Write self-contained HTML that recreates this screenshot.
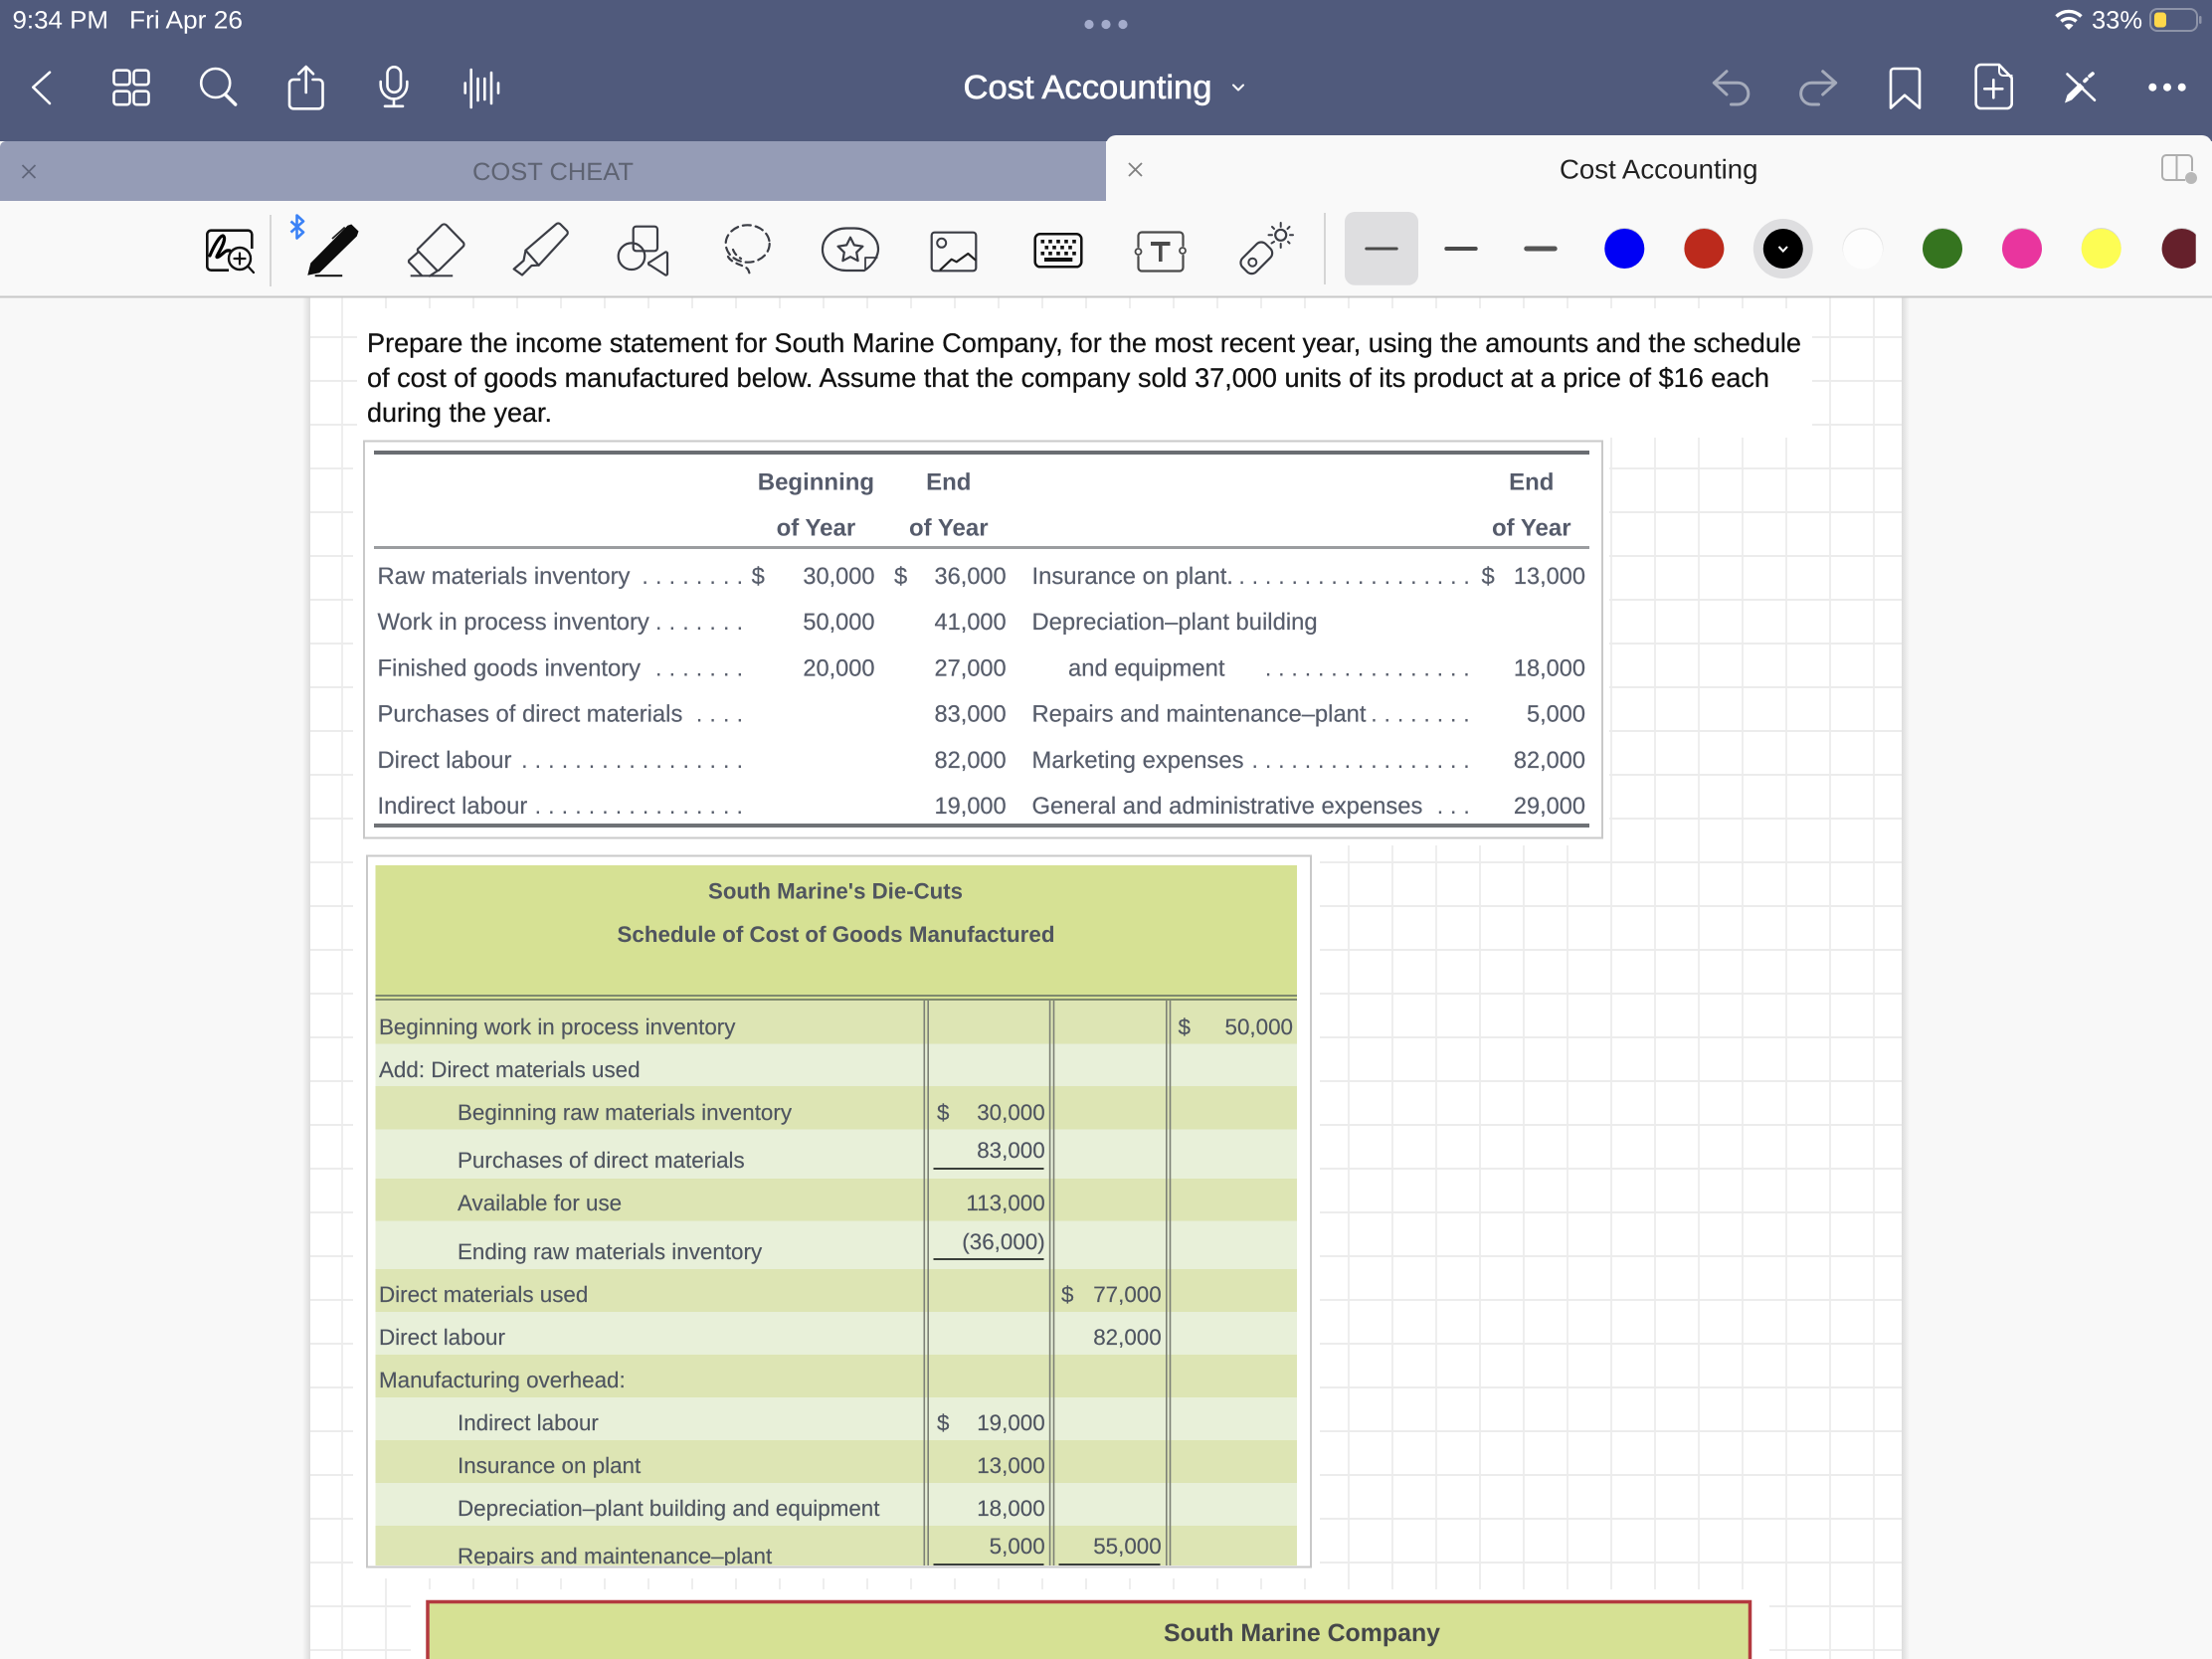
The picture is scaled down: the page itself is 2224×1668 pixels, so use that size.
<!DOCTYPE html>
<html><head><meta charset="utf-8"><title>Cost Accounting</title>
<style>
html,body{margin:0;padding:0;background:#f8f8f8}
svg{display:block;text-rendering:geometricPrecision}
text{font-family:"Liberation Sans",sans-serif;white-space:pre}
.t{font-size:23.8px;fill:#575d6b;stroke:#575d6b;stroke-width:.2}
.b{font-size:24px;fill:#555b6b;font-weight:700;text-anchor:middle}
.n{font-size:23.6px;fill:#575d6b;stroke:#575d6b;stroke-width:.2;text-anchor:end}
.d{font-size:24px;fill:#575d6b;letter-spacing:6.93px}
.r{font-size:24px;fill:#575d6b;letter-spacing:6.63px}
.q{font-size:27px;fill:#111;stroke:#111;stroke-width:.25}
.s{font-size:22.4px;fill:#4e5460;stroke:#4e5460;stroke-width:.15}
.sn{font-size:22.4px;fill:#4e5460;stroke:#4e5460;stroke-width:.15;text-anchor:end}
.ic{fill:none;stroke:#fff;stroke-width:2.6;stroke-linecap:round;stroke-linejoin:round}
.tb{fill:none;stroke:#3b3d45;stroke-width:2.2;stroke-linecap:round;stroke-linejoin:round}
</style></head>
<body>
<svg xmlns="http://www.w3.org/2000/svg" width="2224" height="1668" viewBox="0 0 2224 1668">
<defs>
<pattern id="g" patternUnits="userSpaceOnUse" x="322" y="317" width="44" height="44">
<rect x="21.4" width="1.2" height="44" fill="#e3e3e3"/>
<rect y="21" width="44" height="2" fill="#ececec"/>
</pattern>
<linearGradient id="sl" x1="0" x2="1"><stop offset="0" stop-color="#f8f8f8"/><stop offset="1" stop-color="#dcdcdc"/></linearGradient>
<linearGradient id="sr" x1="0" x2="1"><stop offset="0" stop-color="#dcdcdc"/><stop offset="1" stop-color="#f8f8f8"/></linearGradient>
<clipPath id="tc"><rect x="370" y="862" width="946" height="712"/></clipPath>
<clipPath id="mc"><rect x="2100" y="200" width="107.7" height="90"/></clipPath>
</defs>

<!-- page -->
<rect width="2224" height="1668" fill="#f8f8f8"/>
<rect x="304" y="298" width="8" height="1370" fill="url(#sl)"/>
<rect x="1912" y="298" width="8" height="1370" fill="url(#sr)"/>
<rect x="312" y="298" width="1600" height="1370" fill="#fff"/>
<rect x="312" y="298" width="1600" height="1370" fill="url(#g)"/>
<!-- image blocks covering grid -->
<rect x="359" y="310" width="1463" height="130" fill="#fff"/>
<rect x="355" y="440" width="1263" height="410" fill="#fff"/>
<rect x="355" y="849" width="972" height="738" fill="#fff"/>
<rect x="413" y="1598" width="1366" height="70" fill="#fff"/>

<!-- question -->
<text class="q" x="369" y="354" textLength="1442" lengthAdjust="spacingAndGlyphs">Prepare the income statement for South Marine Company, for the most recent year, using the amounts and the schedule</text>
<text class="q" x="369" y="389" textLength="1410" lengthAdjust="spacingAndGlyphs">of cost of goods manufactured below. Assume that the company sold 37,000 units of its product at a price of $16 each</text>
<text class="q" x="369" y="424" textLength="186" lengthAdjust="spacingAndGlyphs">during the year.</text>

<!-- table 1 -->
<rect x="366" y="443.5" width="1245" height="399" fill="#fff" stroke="#c9c9c9" stroke-width="2"/>
<rect x="376" y="453" width="1222" height="4" fill="#6a6d72"/>
<rect x="376" y="549" width="1222" height="3" fill="#9b9da0"/>
<rect x="376" y="828" width="1222" height="4" fill="#6f7276"/>
<text class="b" x="820.4" y="492.5">Beginning</text>
<text class="b" x="953.8" y="492.5">End</text>
<text class="b" x="820.4" y="538.5">of Year</text>
<text class="b" x="953.8" y="538.5">of Year</text>
<text class="b" x="1539.8" y="492.5">End</text>
<text class="b" x="1539.8" y="538.5">of Year</text>

<text class="t" x="379.5" y="587">Raw materials inventory</text>
<text class="t" x="379.5" y="633">Work in process inventory</text>
<text class="t" x="379.5" y="679.5">Finished goods inventory</text>
<text class="t" x="379.5" y="725.5">Purchases of direct materials</text>
<text class="t" x="379.5" y="772">Direct labour</text>
<text class="t" x="379.5" y="818">Indirect labour</text>
<text class="d" x="645.3" y="587">........</text>
<text class="d" x="658.9" y="633">.......</text>
<text class="d" x="658.9" y="679.5">.......</text>
<text class="d" x="699.7" y="725.5">....</text>
<text class="d" x="524" y="772" style="letter-spacing:6.86px">.................</text>
<text class="d" x="537.5" y="818" style="letter-spacing:6.86px">................</text>
<text class="t" x="755.6" y="587">$</text>
<text class="t" x="899" y="587">$</text>
<text class="n" x="879.5" y="587">30,000</text>
<text class="n" x="879.5" y="633">50,000</text>
<text class="n" x="879.5" y="679.5">20,000</text>
<text class="n" x="1011.7" y="587">36,000</text>
<text class="n" x="1011.7" y="633">41,000</text>
<text class="n" x="1011.7" y="679.5">27,000</text>
<text class="n" x="1011.7" y="725.5">83,000</text>
<text class="n" x="1011.7" y="772">82,000</text>
<text class="n" x="1011.7" y="818">19,000</text>

<text class="t" x="1037.5" y="587">Insurance on plant.</text>
<text class="t" x="1037.5" y="633">Depreciation–plant building</text>
<text class="t" x="1074" y="679.5">and equipment</text>
<text class="t" x="1037.5" y="725.5">Repairs and maintenance–plant</text>
<text class="t" x="1037.5" y="772">Marketing expenses</text>
<text class="t" x="1037.5" y="818">General and administrative expenses</text>
<text class="r" x="1245.2" y="587">..................</text>
<text class="r" x="1271.7" y="679.5">................</text>
<text class="r" x="1378.1" y="725.5">........</text>
<text class="r" x="1258.4" y="772">.................</text>
<text class="r" x="1444.6" y="818">...</text>
<text class="t" x="1489.5" y="587">$</text>
<text class="n" x="1594" y="587">13,000</text>
<text class="n" x="1594" y="679.5">18,000</text>
<text class="n" x="1594" y="725.5">5,000</text>
<text class="n" x="1594" y="772">82,000</text>
<text class="n" x="1594" y="818">29,000</text>

<!-- table 2 -->
<rect x="369" y="860.5" width="949" height="715" fill="#fff" stroke="#c9c9c9" stroke-width="2"/>
<g clip-path="url(#tc)">
<rect x="377.5" y="870" width="926.5" height="130" fill="#d6e194"/>
<rect x="377.5" y="1000" width="926.5" height="6" fill="#d6e194"/>
<rect x="377.5" y="1000" width="926.5" height="2" fill="#7f8a6e"/>
<rect x="377.5" y="1004" width="926.5" height="2" fill="#7f8a6e"/>
<rect x="377.5" y="1006" width="926.5" height="43.5" fill="#dde5b4"/>
<rect x="377.5" y="1049.5" width="926.5" height="42.5" fill="#e8f0d9"/>
<rect x="377.5" y="1092" width="926.5" height="43.5" fill="#dde5b4"/>
<rect x="377.5" y="1135.5" width="926.5" height="49.5" fill="#e8f0d9"/>
<rect x="377.5" y="1185" width="926.5" height="42.5" fill="#dde5b4"/>
<rect x="377.5" y="1227.5" width="926.5" height="48.5" fill="#e8f0d9"/>
<rect x="377.5" y="1276" width="926.5" height="43" fill="#dde5b4"/>
<rect x="377.5" y="1319" width="926.5" height="43" fill="#e8f0d9"/>
<rect x="377.5" y="1362" width="926.5" height="43" fill="#dde5b4"/>
<rect x="377.5" y="1405" width="926.5" height="43" fill="#e8f0d9"/>
<rect x="377.5" y="1448" width="926.5" height="43" fill="#dde5b4"/>
<rect x="377.5" y="1491" width="926.5" height="43" fill="#e8f0d9"/>
<rect x="377.5" y="1534" width="926.5" height="42" fill="#dde5b4"/>
<!-- double rules -->
<g fill="#7c8076">
<rect x="928.5" y="1006" width="1.6" height="570"/><rect x="932.4" y="1006" width="1.6" height="570"/>
<rect x="1054.8" y="1006" width="1.6" height="570"/><rect x="1058.7" y="1006" width="1.6" height="570"/>
<rect x="1172" y="1006" width="1.6" height="570"/><rect x="1175.7" y="1006" width="1.6" height="570"/>
</g>
<text x="840" y="903.5" font-size="22.5" font-weight="700" fill="#50555f" text-anchor="middle" textLength="256" lengthAdjust="spacingAndGlyphs">South Marine's Die-Cuts</text>
<text x="840.5" y="947" font-size="22.5" font-weight="700" fill="#50555f" text-anchor="middle" textLength="440" lengthAdjust="spacingAndGlyphs">Schedule of Cost of Goods Manufactured</text>
<text class="s" x="381" y="1040">Beginning work in process inventory</text>
<text class="s" x="381" y="1083">Add: Direct materials used</text>
<text class="s" x="460" y="1126">Beginning raw materials inventory</text>
<text class="s" x="460" y="1174">Purchases of direct materials</text>
<text class="s" x="460" y="1217">Available for use</text>
<text class="s" x="460" y="1266">Ending raw materials inventory</text>
<text class="s" x="381" y="1309">Direct materials used</text>
<text class="s" x="381" y="1352">Direct labour</text>
<text class="s" x="381" y="1395">Manufacturing overhead:</text>
<text class="s" x="460" y="1438">Indirect labour</text>
<text class="s" x="460" y="1481">Insurance on plant</text>
<text class="s" x="460" y="1524">Depreciation–plant building and equipment</text>
<text class="s" x="460" y="1572">Repairs and maintenance–plant</text>
<text class="s" x="1184.5" y="1040">$</text>
<text class="sn" x="1300" y="1040">50,000</text>
<text class="s" x="942" y="1126">$</text>
<text class="sn" x="1050.7" y="1126">30,000</text>
<text class="sn" x="1050.7" y="1164">83,000</text>
<rect x="938.5" y="1174" width="111" height="2" fill="#3a3f3a"/>
<text class="sn" x="1050.7" y="1217">113,000</text>
<text class="sn" x="1050.7" y="1256">(36,000)</text>
<rect x="938.5" y="1265" width="111" height="2" fill="#3a3f3a"/>
<text class="s" x="1067" y="1309">$</text>
<text class="sn" x="1167.7" y="1309">77,000</text>
<text class="sn" x="1167.7" y="1352">82,000</text>
<text class="s" x="942" y="1438">$</text>
<text class="sn" x="1050.7" y="1438">19,000</text>
<text class="sn" x="1050.7" y="1481">13,000</text>
<text class="sn" x="1050.7" y="1524">18,000</text>
<text class="sn" x="1050.7" y="1562">5,000</text>
<text class="sn" x="1167.7" y="1562">55,000</text>
<rect x="938.5" y="1572" width="111" height="2" fill="#3a3f3a"/>
<rect x="1064.5" y="1572" width="102" height="2" fill="#3a3f3a"/>
</g>

<!-- block 3 -->
<rect x="430" y="1610.5" width="1329.5" height="60" fill="#d6e194" stroke="#b3393f" stroke-width="3.5"/>
<text x="1170" y="1650" font-size="25" font-weight="700" fill="#45474a" textLength="278" lengthAdjust="spacingAndGlyphs">South Marine Company</text>

<!-- header -->
<rect width="2224" height="142" fill="#505a7c"/>
<text x="12.5" y="28.5" font-size="25" fill="#fff" textLength="96.500" lengthAdjust="spacingAndGlyphs">9:34 PM</text>
<text x="130" y="28.5" font-size="25" fill="#fff" textLength="114" lengthAdjust="spacingAndGlyphs">Fri Apr 26</text>
<circle cx="1095" cy="24.5" r="4.6" fill="#a3abcb"/><circle cx="1112" cy="24.5" r="4.6" fill="#a3abcb"/><circle cx="1129" cy="24.5" r="4.6" fill="#a3abcb"/>
<!-- wifi -->
<g fill="none" stroke="#fff" stroke-width="3.4">
<path d="M2067.5 16.5A18 18 0 0 1 2092.5 16.5"/>
<path d="M2072.5 21.5A11 11 0 0 1 2087.5 21.5"/>
</g>
<path d="M2075.5 25.5A6.5 6.5 0 0 1 2084.5 25.5L2080 30Z" fill="#fff"/>
<text x="2103" y="28.5" font-size="25" fill="#fff" textLength="51" lengthAdjust="spacingAndGlyphs">33%</text>
<rect x="2162" y="9" width="47" height="22" rx="7" fill="none" stroke="#8d93a8" stroke-width="2"/>
<rect x="2166" y="12.5" width="12" height="15" rx="3.5" fill="#ffd84a"/>
<rect x="2211" y="16" width="2.5" height="8" rx="1.2" fill="#8d93a8"/>

<!-- left nav icons -->
<path class="ic" stroke-width="3" d="M50 72.7L33.3 87.7L50 104"/>
<rect class="ic" x="114.5" y="70.7" width="16" height="14.5" rx="3"/>
<rect class="ic" x="134.5" y="70.7" width="15" height="14.5" rx="3"/>
<rect class="ic" x="114.5" y="91.7" width="16" height="13.5" rx="3"/>
<rect class="ic" x="134.5" y="91.7" width="15" height="13.5" rx="3"/>
<circle class="ic" cx="216.7" cy="83.5" r="14.5"/>
<path class="ic" style="stroke-width:3.4" d="M226.5 95L236.7 105"/>
<path class="ic" d="M301 80H295A4 4 0 0 0 291 84V105A4 4 0 0 0 295 109.3H320.5A4 4 0 0 0 324.5 105V84A4 4 0 0 0 320.5 80H314.5"/>
<path class="ic" d="M307.7 93V67M300.3 74.3L307.7 67L315 74.3"/>
<rect class="ic" x="389.5" y="67.3" width="13.5" height="25.5" rx="6.7"/>
<path class="ic" d="M382.7 82V85A13.3 14.5 0 0 0 409.3 85V82M396 100V106.7M387 106.8H405"/>
<path class="ic" d="M467.7 83.5V93.5M473.7 70V108M480.5 79V101M487.3 79V100M494 73V104M501 83.5V93.5"/>

<!-- title -->
<text x="968.5" y="99" font-size="33.5" fill="#fff" stroke="#fff" stroke-width=".6" textLength="250" lengthAdjust="spacingAndGlyphs">Cost Accounting</text>
<path class="ic" style="stroke-width:2" d="M1240 85.5L1245 90.5L1250 85.5"/>

<!-- right nav icons -->
<g fill="none" stroke="#a5abbb" stroke-width="3" stroke-linecap="round" stroke-linejoin="round">
<path d="M1736 71.7L1723.3 83.3L1736 95M1723.3 83.3H1747A10.8 10.8 0 0 1 1747 105H1740.5"/>
<path d="M1832.7 71.7L1845.7 83.3L1832.7 95M1845.7 83.3H1821.5A10.8 10.8 0 0 0 1821.5 105H1828.5"/>
</g>
<path class="ic" d="M1904 69H1927A3 3 0 0 1 1930 72V108.5L1915 95.7L1901 108.5V72A3 3 0 0 1 1904 69Z"/>
<path class="ic" d="M1992 65H2010L2022.7 78.3V104A5 5 0 0 1 2017.7 109H1991.7A5 5 0 0 1 1986.7 104V70A5 5 0 0 1 1992 65Z"/>
<path class="ic" style="stroke-width:2" d="M2010 65V72A4 4 0 0 0 2014 76H2022.7"/>
<path class="ic" d="M2004.3 80.3V98.3M1995.3 89.3H2013.3"/>
<path class="ic" d="M2078.5 74.5L2106 100.7"/>
<path d="M2076 103.5L2078.5 95.5L2091 83.5L2095.5 88L2083 100.5Z" fill="#fff"/>
<path class="ic" style="stroke-width:3.6" d="M2096 81.5L2098 79.5M2101 76.5L2104 74"/>
<circle cx="2164.3" cy="87.7" r="4" fill="#fff"/><circle cx="2179" cy="87.7" r="4" fill="#fff"/><circle cx="2193.7" cy="87.7" r="4" fill="#fff"/>

<!-- tabs -->
<path d="M0 148A6 6 0 0 1 6 142H1112V202H0Z" fill="#959cb6"/>
<text x="475" y="181" font-size="25" fill="#5e6372" textLength="162" lengthAdjust="spacingAndGlyphs">COST CHEAT</text>
<path d="M22.5 166L35.5 179M35.5 166L22.5 179" stroke="#60667a" stroke-width="1.8" fill="none"/>
<path d="M1112 146A10 10 0 0 1 1122 136H2214A10 10 0 0 1 2224 146V202H1112Z" fill="#f9f9f9"/>
<rect x="0" y="202" width="2224" height="96" fill="#f9f9f9"/>
<rect x="0" y="297.5" width="2224" height="2" fill="#c8c8c8"/>
<path d="M1135 164L1148 177M1148 164L1135 177" stroke="#808080" stroke-width="1.8" fill="none"/>
<text x="1568" y="179.5" font-size="27.3" fill="#222" textLength="199.5" lengthAdjust="spacingAndGlyphs">Cost Accounting</text>
<g fill="none" stroke="#aeaeae" stroke-width="2">
<path d="M2200 156H2178A4 4 0 0 0 2174 160V177A4 4 0 0 0 2178 181H2197"/>
<path d="M2200 156A4 4 0 0 1 2204 160V172M2188.5 156V181"/>
</g>
<circle cx="2203" cy="179" r="6" fill="#b8b8b8"/>

<!-- toolbar icons -->
<path d="M230 271.7H212.3A4 4 0 0 1 208.3 267.7V235.7A4 4 0 0 1 212.3 231.7H249.3A4 4 0 0 1 253.3 235.7V250" fill="none" stroke="#111" stroke-width="2.6"/>
<path d="M211 257C216 245 224 232 225.5 239C226.500 247 213 262 220 258C225 255 226 251 231 252" fill="none" stroke="#000" stroke-width="3.2" stroke-linecap="round"/>
<circle cx="241" cy="260" r="11" fill="#f9f9f9" stroke="#111" stroke-width="2.4"/>
<path d="M241 254.5V265.5M235.5 260H246.5M249.5 268L255 274" fill="none" stroke="#111" stroke-width="2.2" stroke-linecap="round"/>
<rect x="271" y="216" width="2" height="72" fill="#d6d6d6"/>
<path d="M292.5 222.5L305 233.5L298.5 239.5V216.5L305 222.5L292.5 233.5" fill="none" stroke="#3b82f6" stroke-width="2.6" stroke-linejoin="round"/>
<path d="M309.3 276.7L312.300 264.500L349.500 226.800L353.300 225.500L360.500 232.500L358.800 237.500L321.200 274.300Z" fill="#0c0c0c"/>
<path d="M334 240L346.700 228.500" fill="none" stroke="#222" stroke-width="1.8"/>
<rect x="316.7" y="276.2" width="27.5" height="2" fill="#111"/>
<path class="tb" d="M444 226.5L421 249.5A2 2 0 0 0 420 252L439 271.5A2 2 0 0 0 441.5 271.5L465.5 248A3 3 0 0 0 465.5 243.5L449 226.5A3.5 3.5 0 0 0 444 226.5Z"/>
<path class="tb" d="M421 253L412 261A2 2 0 0 0 412 264.5L424 277M439.5 272.5L432 277.500"/>
<rect x="412.7" y="276.3" width="42.5" height="2" fill="#3b3d45"/>
<path class="tb" d="M559 225.5L528.5 251.7L541.7 266.7L570 236A3 3 0 0 0 570 232L563.5 225.5A3 3 0 0 0 559 225.5Z"/>
<path class="tb" d="M528.5 251.7L526.5 262L516.7 270.5L525 276.5L534.5 267L541.7 266.7"/>
<rect class="tb" x="636.7" y="227.7" width="24.3" height="24.6" rx="3"/>
<circle class="tb" cx="635" cy="257.7" r="13.3"/>
<path class="tb" d="M671 254.5V275.5A1.5 1.5 0 0 1 669 276.5L653.5 266.5A1.5 1.5 0 0 1 653.5 263.5L669 253.5A1.5 1.5 0 0 1 671 254.5Z"/>
<ellipse class="tb" cx="751.7" cy="245" rx="22" ry="18.7" stroke-dasharray="8 5"/>
<path class="tb" d="M737 251C739 256 742 258 745 260M732 258C735 264 745 266 750 269C752 270 753 272 754 277" stroke-dasharray="6 5"/>
<path class="tb" d="M851 229.5H859A24 21 0 0 1 883 250.5C883 258 877 267 869 272H851A24 21 0 0 1 827 250.5A24 21 0 0 1 851 229.5Z"/>
<path class="tb" style="stroke-width:1.8" d="M881.7 259H870V271"/>
<path class="tb" d="M855 238.7L858.8 246.4L867.4 247.7L861.2 253.7L862.6 262.2L855 258.2L847.4 262.2L848.8 253.7L842.6 247.7L851.2 246.4Z"/>
<rect class="tb" x="936.7" y="233.7" width="44.6" height="38.6" rx="3"/>
<circle class="tb" style="stroke-width:2" cx="946.7" cy="244.3" r="4.5"/>
<path fill="none" stroke="#222" stroke-width="2.2" stroke-linejoin="round" d="M945 271.7L956.7 260.7L961.7 263.3L973.3 255L981 261.7"/>
<rect x="1040.7" y="235.3" width="46.6" height="33" rx="5" fill="none" stroke="#111" stroke-width="2.5"/>
<g fill="#111">
<rect x="1046.5" y="241" width="3.6" height="3.6"/><rect x="1054.2" y="241" width="3.6" height="3.6"/><rect x="1062.2" y="241" width="3.6" height="3.6"/><rect x="1070.2" y="241" width="3.6" height="3.6"/><rect x="1078.2" y="241" width="3.6" height="3.6"/>
<rect x="1050.5" y="247" width="3.6" height="3.6"/><rect x="1058.2" y="247" width="3.6" height="3.6"/><rect x="1066.2" y="247" width="3.6" height="3.6"/><rect x="1074.2" y="247" width="3.6" height="3.6"/>
<rect x="1046.5" y="253" width="3.6" height="3.6"/><rect x="1054.2" y="253" width="3.6" height="3.6"/><rect x="1062.2" y="253" width="3.6" height="3.6"/><rect x="1070.2" y="253" width="3.6" height="3.6"/><rect x="1078.2" y="253" width="3.6" height="3.6"/>
<rect x="1050" y="259" width="28.3" height="4"/>
</g>
<g fill="none" stroke="#4a4a4a" stroke-width="2.2" stroke-linecap="round">
<path d="M1144.5 248V237A3.5 3.5 0 0 1 1148 233.5H1186A3.5 3.5 0 0 1 1189.5 237V247M1144.5 258V269A3.5 3.5 0 0 0 1148 272.5H1186A3.5 3.5 0 0 0 1189.5 269V257"/>
<circle cx="1144.5" cy="253" r="3" stroke-width="1.8"/><circle cx="1189" cy="252" r="3" stroke-width="1.8"/>
</g>
<rect x="1157" y="243" width="19.5" height="4" fill="#4a4a4a"/><rect x="1165" y="243" width="3.6" height="20" fill="#4a4a4a"/>
<rect class="tb" x="1246.8" y="249.6" width="33" height="19.4" rx="6.5" transform="rotate(-45 1263.3 259.3)"/>
<circle class="tb" style="stroke-width:2" cx="1259.3" cy="263.7" r="4"/>
<circle class="tb" cx="1287.7" cy="236.3" r="5.5"/>
<path class="tb" style="stroke-width:2" d="M1287.7 224V228M1287.7 245V249M1275.5 236.3H1279M1297 236.3H1300M1279 228L1281 230M1296.5 228L1294.5 230M1295 243L1296.5 244.5M1278.5 244.5L1281 243"/>
<rect x="1331" y="214" width="2" height="72" fill="#d6d6d6"/>
<rect x="1352" y="213" width="74" height="73.7" rx="10" fill="#dedee0"/>
<rect x="1372.3" y="248.5" width="33.4" height="3" rx="1.5" fill="#4a4a4a"/>
<rect x="1452.3" y="248" width="33.4" height="4" rx="2" fill="#4a4a4a"/>
<rect x="1532.3" y="247.5" width="33.4" height="5" rx="2.5" fill="#555"/>
<g>
<circle cx="1633.3" cy="249" r="20" fill="#d0d0d0"/><circle cx="1633.3" cy="250" r="20" fill="#0000f5"/>
<circle cx="1713.4" cy="249" r="20" fill="#d0d0d0"/><circle cx="1713.4" cy="250" r="20" fill="#bc2a1c"/>
<circle cx="1792.8" cy="250" r="30" fill="#dedee0"/><circle cx="1792.8" cy="250" r="20" fill="#000"/>
<path d="M1788.5 248L1792.8 252.5L1797 248" fill="none" stroke="#fff" stroke-width="2"/>
<circle cx="1873" cy="249.5" r="20.5" fill="#e6e6e6"/><circle cx="1873" cy="250.5" r="20" fill="#fdfdfd"/>
<circle cx="1953" cy="249" r="20" fill="#d0d0d0"/><circle cx="1953" cy="250" r="20" fill="#35741f"/>
<circle cx="2033" cy="249" r="20" fill="#d0d0d0"/><circle cx="2033" cy="250" r="20" fill="#e9359e"/>
<circle cx="2112.7" cy="249" r="20" fill="#d8d8d8"/><circle cx="2112.7" cy="250" r="20" fill="#fdfd54"/>
<g clip-path="url(#mc)"><circle cx="2193.6" cy="249" r="20" fill="#d0d0d0"/><circle cx="2193.6" cy="250" r="20" fill="#65202b"/></g>
</g>
</svg>
</body></html>
